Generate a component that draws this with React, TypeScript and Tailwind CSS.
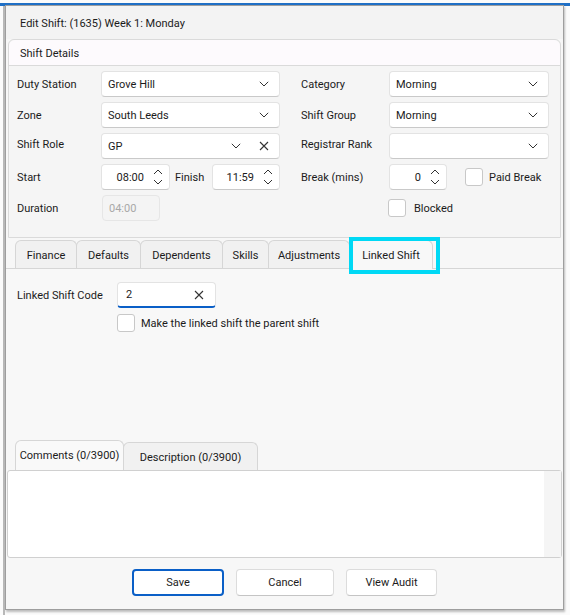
import React from "react";

const font = { fontFamily: 'Roboto, "Noto Sans", sans-serif' };

const Chevron = () => (
  <svg width="10" height="6" viewBox="0 0 10 6" className="shrink-0">
    <path d="M0.8 0.8L5 5L9.2 0.8" fill="none" stroke="#333" strokeWidth="1" />
  </svg>
);

const Cross = () => (
  <svg width="10" height="10" viewBox="0 0 10 10" className="shrink-0">
    <path d="M1 1L9 9M9 1L1 9" fill="none" stroke="#333" strokeWidth="1.1" />
  </svg>
);

const Spin = () => (
  <svg width="10" height="16" viewBox="0 0 10 16" className="shrink-0">
    <path d="M1 5L5 1L9 5M1 11L5 15L9 11" fill="none" stroke="#333" strokeWidth="1" />
  </svg>
);

const Select = ({ value, w, clear }: { value: string; w: string; clear?: boolean }) => (
  <div
    className={`${w} h-[26px] shrink-0 bg-white rounded-[4px] border border-[#e3e3e3] border-b-[#c9c9c9] flex items-center pl-[6px] pr-[10px]`}
  >
    <span className="flex-1 truncate pt-[2px]">{value}</span>
    <Chevron />
    {clear && (
      <span className="ml-[18px]">
        <Cross />
      </span>
    )}
  </div>
);

const Spinner = ({ value, w }: { value: string; w: string }) => (
  <div
    className={`${w} h-[26px] shrink-0 bg-white rounded-[4px] border border-[#e3e3e3] border-b-[#c9c9c9] flex items-center justify-end pr-[6px]`}
  >
    <span className="mr-[9px] pt-[2px]">{value}</span>
    <Spin />
  </div>
);

const Check = () => (
  <div className="w-[18px] h-[18px] bg-white rounded-[3px] border border-[#c8c8c8] shrink-0" />
);

const Label = ({ children, w }: { children: React.ReactNode; w: string }) => (
  <div className={`${w} shrink-0 whitespace-nowrap pt-[2px]`}>{children}</div>
);

const Tab = ({ label, w, active }: { label: string; w: string; active?: boolean }) => (
  <div
    className={`${w} shrink-0 whitespace-nowrap flex items-center justify-center rounded-t-[6px] border border-[#d6d6d6] border-b-0 -mr-px pt-[3px] ${
      active ? "bg-[#f8f8f8] h-[29px] -mb-px" : "bg-[#f1f1f1] h-[28px]"
    }`}
  >
    {label}
  </div>
);

export default function App() {
  return (
    <div
      className="w-[570px] h-[615px] relative overflow-hidden bg-[#fbfbfb] text-[11px] text-[#1b1b1b]"
      style={font}
    >
      <div className="h-[3px]" />
      <div className="h-[3px] bg-[#1f6fc5]" />
      <div className="absolute left-[3px] top-[6px] bottom-0 w-[2px] bg-[#b8b8b8]" />
      <div className="ml-[5px] -mt-px w-[559px] h-[605px] border border-[#9e9e9e] bg-[#f7f7f7] flex flex-col shadow-[1px_2px_2px_rgba(0,0,0,0.25)]">
        {/* title */}
        <div className="h-[33px] shrink-0 bg-[#f3f3f3] flex items-center pl-[14px] pt-[4px]">
          Edit Shift: (1635) Week 1: Monday
        </div>

        {/* shift details panel */}
        <div className="mx-[2px] h-[199px] shrink-0 border border-[#dadada] rounded-t-[6px] bg-[#f5f5f5] flex flex-col">
          <div className="h-[26px] bg-[#fdfafd] rounded-t-[6px] border-b border-[#dadada] flex items-center pl-[11px] pt-[3px]">
            Shift Details
          </div>
          <div className="pl-[8px] pt-[5px] flex flex-col gap-[5px]">
            <div className="flex items-center h-[26px]">
              <Label w="w-[84px]">Duty Station</Label>
              <Select value="Grove Hill" w="w-[179px]" />
              <div className="w-[21px] shrink-0" />
              <Label w="w-[88px]">Category</Label>
              <Select value="Morning" w="w-[160px]" />
            </div>
            <div className="flex items-center h-[26px]">
              <Label w="w-[84px]">Zone</Label>
              <Select value="South Leeds" w="w-[179px]" />
              <div className="w-[21px] shrink-0" />
              <Label w="w-[88px]">Shift Group</Label>
              <Select value="Morning" w="w-[160px]" />
            </div>
            <div className="flex items-center h-[26px]">
              <Label w="w-[84px]">
                <div className="-mt-[4px]">Shift Role</div>
              </Label>
              <Select value="GP" w="w-[179px]" clear />
              <div className="w-[21px] shrink-0" />
              <Label w="w-[88px]">
                <div className="-mt-[4px]">Registrar Rank</div>
              </Label>
              <Select value="" w="w-[160px]" />
            </div>
            <div className="flex items-center h-[26px]">
              <Label w="w-[84px]">Start</Label>
              <Spinner value="08:00" w="w-[69px]" />
              <div className="w-[42px] shrink-0 pl-[5px] pt-[2px]">Finish</div>
              <Spinner value="11:59" w="w-[68px]" />
              <div className="w-[21px] shrink-0" />
              <Label w="w-[88px]">Break (mins)</Label>
              <Spinner value="0" w="w-[58px]" />
              <div className="w-[18px] shrink-0" />
              <Check />
              <span className="ml-[6px] whitespace-nowrap pt-[2px]">Paid Break</span>
            </div>
            <div className="flex items-center h-[26px]">
              <Label w="w-[85px]">Duration</Label>
              <div className="w-[58px] h-[26px] shrink-0 rounded-[4px] border border-[#e6e6e6] bg-[#f4f4f4] text-[#a8a8a8] flex items-center pl-[6px] pt-[2px]">
                04:00
              </div>
              <div className="w-[228px] shrink-0" />
              <Check />
              <span className="ml-[8px] pt-[2px]">Blocked</span>
            </div>
          </div>
        </div>

        {/* tabs */}
        <div className="mt-[3px] h-[28px] shrink-0 flex items-end pl-[9px] border-b border-[#d6d6d6] relative">
          <Tab label="Finance" w="w-[62px]" />
          <Tab label="Defaults" w="w-[65px]" />
          <Tab label="Dependents" w="w-[83px]" />
          <Tab label="Skills" w="w-[47px]" />
          <Tab label="Adjustments" w="w-[82px]" />
          <Tab label="Linked Shift" w="w-[84px]" active />
          <div className="absolute left-[343px] -top-[4px] w-[91px] h-[37px] border-[4px] border-[#00d9f5]" />
        </div>

        {/* tab content */}
        <div className="h-[171px] shrink-0 bg-[#f8f8f8] pl-[11px] pt-[13px]">
          <div className="flex items-center h-[26px]">
            <div className="w-[100px] shrink-0 whitespace-nowrap pt-[2px]">Linked Shift Code</div>
            <div className="w-[99px] h-[26px] bg-white rounded-[4px] border border-[#e3e3e3] border-b-[2px] border-b-[#0a5fc7] flex items-center pl-[8px] pr-[11px]">
              <span className="flex-1 pt-[2px]">2</span>
              <Cross />
            </div>
          </div>
          <div className="flex items-center mt-[6px] ml-[100px]">
            <Check />
            <span className="ml-[6px] whitespace-nowrap pt-[2px]">Make the linked shift the parent shift</span>
          </div>
        </div>

        {/* comments tabs */}
        <div className="h-[30px] shrink-0 flex items-end pl-[9px]">
          <div className="w-[109px] h-[30px] shrink-0 whitespace-nowrap flex items-center justify-center rounded-t-[6px] border border-[#d6d6d6] border-b-0 bg-[#f9f9f9] -mr-px pt-[2px]">
            Comments (0/3900)
          </div>
          <div className="w-[135px] h-[28px] shrink-0 whitespace-nowrap flex items-center justify-center rounded-t-[6px] border border-[#d6d6d6] border-b-0 bg-[#f1f1f1] pt-[3px]">
            Description (0/3900)
          </div>
        </div>

        {/* textarea */}
        <div className="mx-[1px] h-[88px] shrink-0 border border-[#d0d0d0] rounded-[3px] bg-white flex">
          <div className="flex-1" />
          <div className="w-[17px] bg-[#f5f5f5]" />
        </div>

        {/* buttons */}
        <div className="flex-1 flex justify-center items-start pt-[11px] gap-[12px]">
          <button className="w-[92px] h-[27px] bg-white rounded-[4px] border-[2px] border-[#0a5fc7] pt-[2px]">
            Save
          </button>
          <button className="w-[98px] h-[27px] bg-white rounded-[4px] border border-[#dcdcdc] border-b-[#c4c4c4] pt-[2px]">
            Cancel
          </button>
          <button className="w-[91px] h-[27px] bg-white rounded-[4px] border border-[#dcdcdc] border-b-[#c4c4c4] pt-[2px]">
            View Audit
          </button>
        </div>
      </div>
    </div>
  );
}
